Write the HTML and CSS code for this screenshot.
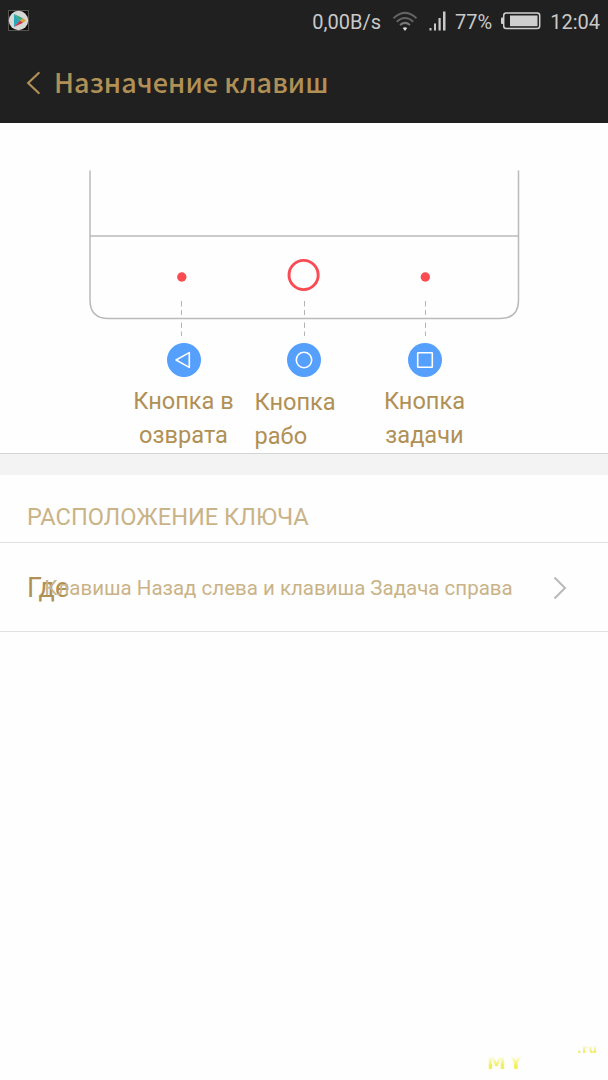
FILE: index.html
```html
<!DOCTYPE html>
<html lang="ru">
<head>
<meta charset="UTF-8">
<meta name="viewport" content="width=device-width, initial-scale=1.0">
<title>Назначение клавиш</title>
<link rel="stylesheet" href="styles.css">
</head>
<body>
<!-- status bar -->
<div class="status-bar">
    <svg class="play-icon" width="21" height="21" viewBox="0 0 21 21">
        <rect x="0.5" y="0.5" width="20" height="20" fill="#111" stroke="#55534f"/>
        <circle cx="10.5" cy="10.5" r="9.7" fill="#d8d8d6"/>
        <path d="M6 4v13l6-6.5z" fill="#28a9b8"/>
        <path d="M6 4l6 6.5 3-2.2z" fill="#3aa67e"/>
        <path d="M15 8.3l-3 2.2 3 2.2 3-2.2z" fill="#dda13b"/>
        <path d="M6 17l6-6.5 3 2.2z" fill="#c3374f"/>
    </svg>
    <div class="status-right">
        <span class="net-speed">0,00B/s</span>
        <svg class="wifi" width="26" height="22" viewBox="0 0 26 22" fill="none" stroke-width="2">
            <path d="M1.5 7.2Q13-3.4 24.5 7.2" stroke="#626262"/>
            <path d="M4.7 10.7Q13 3.2 21.3 10.7" stroke="#626262"/>
            <path d="M8 14Q13 9.7 18 14" stroke="#777"/>
            <path d="M10.8 17q2.200-1.700 4.400 0l-2.200 3z" fill="#ddd"/>
        </svg>
        <svg class="signal" width="18" height="20" viewBox="0 0 18 20" fill="#c9c9c9">
            <rect x="0.5" y="17" width="2" height="2.5"/>
            <rect x="5" y="12.5" width="2" height="7"/>
            <rect x="9.5" y="7" width="2.2" height="12.5"/>
            <rect x="14" y="0.5" width="2.5" height="19"/>
        </svg>
        <span class="percent">77%</span>
        <svg class="battery" width="40" height="18" viewBox="0 0 40 18">
            <rect x="2.7" y="1" width="36" height="15.6" rx="2.5" fill="none" stroke="#cfcfcf" stroke-width="1.5"/>
            <rect x="0" y="5.5" width="3" height="6.5" rx="1" fill="#cfcfcf"/>
            <rect x="9" y="3.5" width="27.5" height="10.7" fill="#cfcfcf"/>
        </svg>
        <span class="clock">12:04</span>
    </div>
</div>

<!-- title bar -->
<div class="title-bar">
    <svg class="back" width="14" height="24" viewBox="0 0 14 24">
        <path d="M12.7 2L2.2 12l10.5 10" fill="none" stroke="#b09055" stroke-width="2.2" stroke-linecap="round"/>
    </svg>
    <h1 class="title">Назначение клавиш</h1>
</div>

<!-- key diagram -->
<div class="diagram">
    <svg class="phone" width="608" height="217" viewBox="0 123 608 217" fill="none">
        <path d="M90 170.500V300Q90 318.500 108.500 318.500H500Q518.500 318.500 518.500 300V170.500M90 236H518" stroke="#bababc" stroke-width="1.5"/>
        <circle cx="181.8" cy="277" r="4.7" fill="#f94b50"/>
        <circle cx="303.6" cy="275" r="14.6" stroke="#f94b54" stroke-width="2.9"/>
        <circle cx="425.3" cy="277" r="4.7" fill="#f94b50"/>
        <path d="M181.500 301v35M304.500 301v35M425.500 301v35" stroke="#b4b4b4" stroke-dasharray="5.5 3.5 5 7.500 5.5 3.5 5.5 20"/>
    </svg>
    <div class="keys">
        <div class="key">
            <svg width="34" height="34" viewBox="0 0 34 34" fill="none">
                <circle cx="17" cy="17" r="17" fill="#559ffd"/>
                <path d="M9 17L22.300 9.600V24.400z" stroke="#fff" stroke-width="1.6" stroke-linejoin="round"/>
            </svg>
            <div class="key-label">Кнопка в<br>озврата</div>
        </div>
        <div class="key key-home">
            <svg width="34" height="34" viewBox="0 0 34 34" fill="none">
                <circle cx="17" cy="17" r="17" fill="#559ffd"/>
                <circle cx="17" cy="17" r="7.7" stroke="#fff" stroke-width="1.6"/>
            </svg>
            <div class="key-label">Кнопка<br>рабо</div>
        </div>
        <div class="key">
            <svg width="34" height="34" viewBox="0 0 34 34" fill="none">
                <circle cx="17" cy="17" r="17" fill="#559ffd"/>
                <rect x="9.7" y="9.7" width="14.6" height="14.6" rx="0.5" stroke="#fff" stroke-width="1.6"/>
            </svg>
            <div class="key-label">Кнопка<br>задачи</div>
        </div>
    </div>
</div>
<div class="divider"></div>

<!-- key position -->
<h2 class="section-title">РАСПОЛОЖЕНИЕ КЛЮЧА</h2>
<div class="row">
    <span class="row-title">Где</span>
    <span class="row-value">Клавиша Назад слева и клавиша Задача справа</span>
    <svg class="arrow" width="14" height="24" viewBox="0 0 14 24">
        <path d="M1.5 1.5L12 12 1.500 22.500" fill="none" stroke="#b9b9b9" stroke-width="2"/>
    </svg>
</div>

<div class="watermark">
    <span class="mark-my">MY</span>
    <span class="mark-ru">.ru</span>
</div>
</body>
</html>
```

FILE: styles.css
```css
* {
    box-sizing: border-box;
}

body {
    margin: 0;
    width: 608px;
    height: 1080px;
    display: flex;
    flex-direction: column;
    overflow: hidden;
    background: #fefefe;
    font-family: Roboto, "Liberation Sans", sans-serif;
    color: #b09055;
}

svg {
    display: block;
    flex-shrink: 0;
}

h1, h2 {
    margin: 0;
    font-weight: normal;
}

.status-bar {
    height: 43px;
    padding: 0 8px;
    display: flex;
    align-items: center;
    justify-content: space-between;
    background: #202020;
    color: #c9c9c9;
    font-size: 20px;
}

.play-icon {
    margin-bottom: 2px;
}

.status-right {
    display: flex;
    align-items: center;
}

.wifi {
    margin: 0 11px;
}

.signal {
    margin-right: 8px;
    margin-bottom: 1px;
}

.battery {
    margin: 0 9px 1px;
}

.title-bar {
    height: 80px;
    padding-left: 26px;
    padding-bottom: 1px;
    display: flex;
    align-items: center;
    background: #202020;
}

.title {
    margin-top: -1px;
    margin-left: 14px;
    font-family: "Noto Sans CJK SC", sans-serif;
    font-weight: 500;
    font-size: 27px;
    line-height: 40px;
    letter-spacing: 0.07px;
}

/* diagram */
.diagram {
    height: 331px;
    border-bottom: 1px solid #d4d4d4;
}

.keys {
    margin-top: 3px;
    padding-left: 123px;
    display: grid;
    grid-template-columns: 121px 120px 121px;
}

.key {
    display: flex;
    flex-direction: column;
    align-items: center;
}

.key-label {
    margin-top: 7px;
    font-size: 23.6px;
    line-height: 34px;
    text-align: center;
    white-space: nowrap;
}

.key-home .key-label {
    width: 99px;
    margin-top: 8px;
    text-align: left;
}

.divider {
    height: 21px;
    background: #f3f3f3;
}

/* list */
.section-title {
    height: 68px;
    padding: 27px 27px 0;
    border-bottom: 1px solid #e0e0e0;
    font-size: 23.6px;
    line-height: 30px;
    color: #cab387;
}

.row {
    height: 89px;
    padding: 1px 41px 0 27px;
    display: flex;
    align-items: center;
    border-bottom: 1px solid #e0e0e0;
}

.row-title {
    font-size: 27px;
}

.row-value {
    margin-left: -25px;
    font-size: 20.5px;
    color: #cab387;
    white-space: nowrap;
}

.arrow {
    margin-left: auto;
}

.watermark {
    margin-top: auto;
    height: 40px;
    padding-left: 487px;
    display: flex;
    align-items: flex-start;
    font-family: "DejaVu Sans", sans-serif;
    font-weight: bold;
}

.mark-my,
.mark-ru {
    color: transparent;
    -webkit-background-clip: text;
    background-clip: text;
}

.mark-my {
    width: 90px;
    margin-top: 10px;
    font-size: 19px;
    line-height: 24px;
    letter-spacing: 3px;
    background-image: linear-gradient(#fefefe 25%, #f2ef55 65%);
}

.mark-ru {
    font-size: 12px;
    line-height: 18px;
    letter-spacing: 0.5px;
    background-image: linear-gradient(#fefefe 25%, #f0ec60 65%);
}
```
